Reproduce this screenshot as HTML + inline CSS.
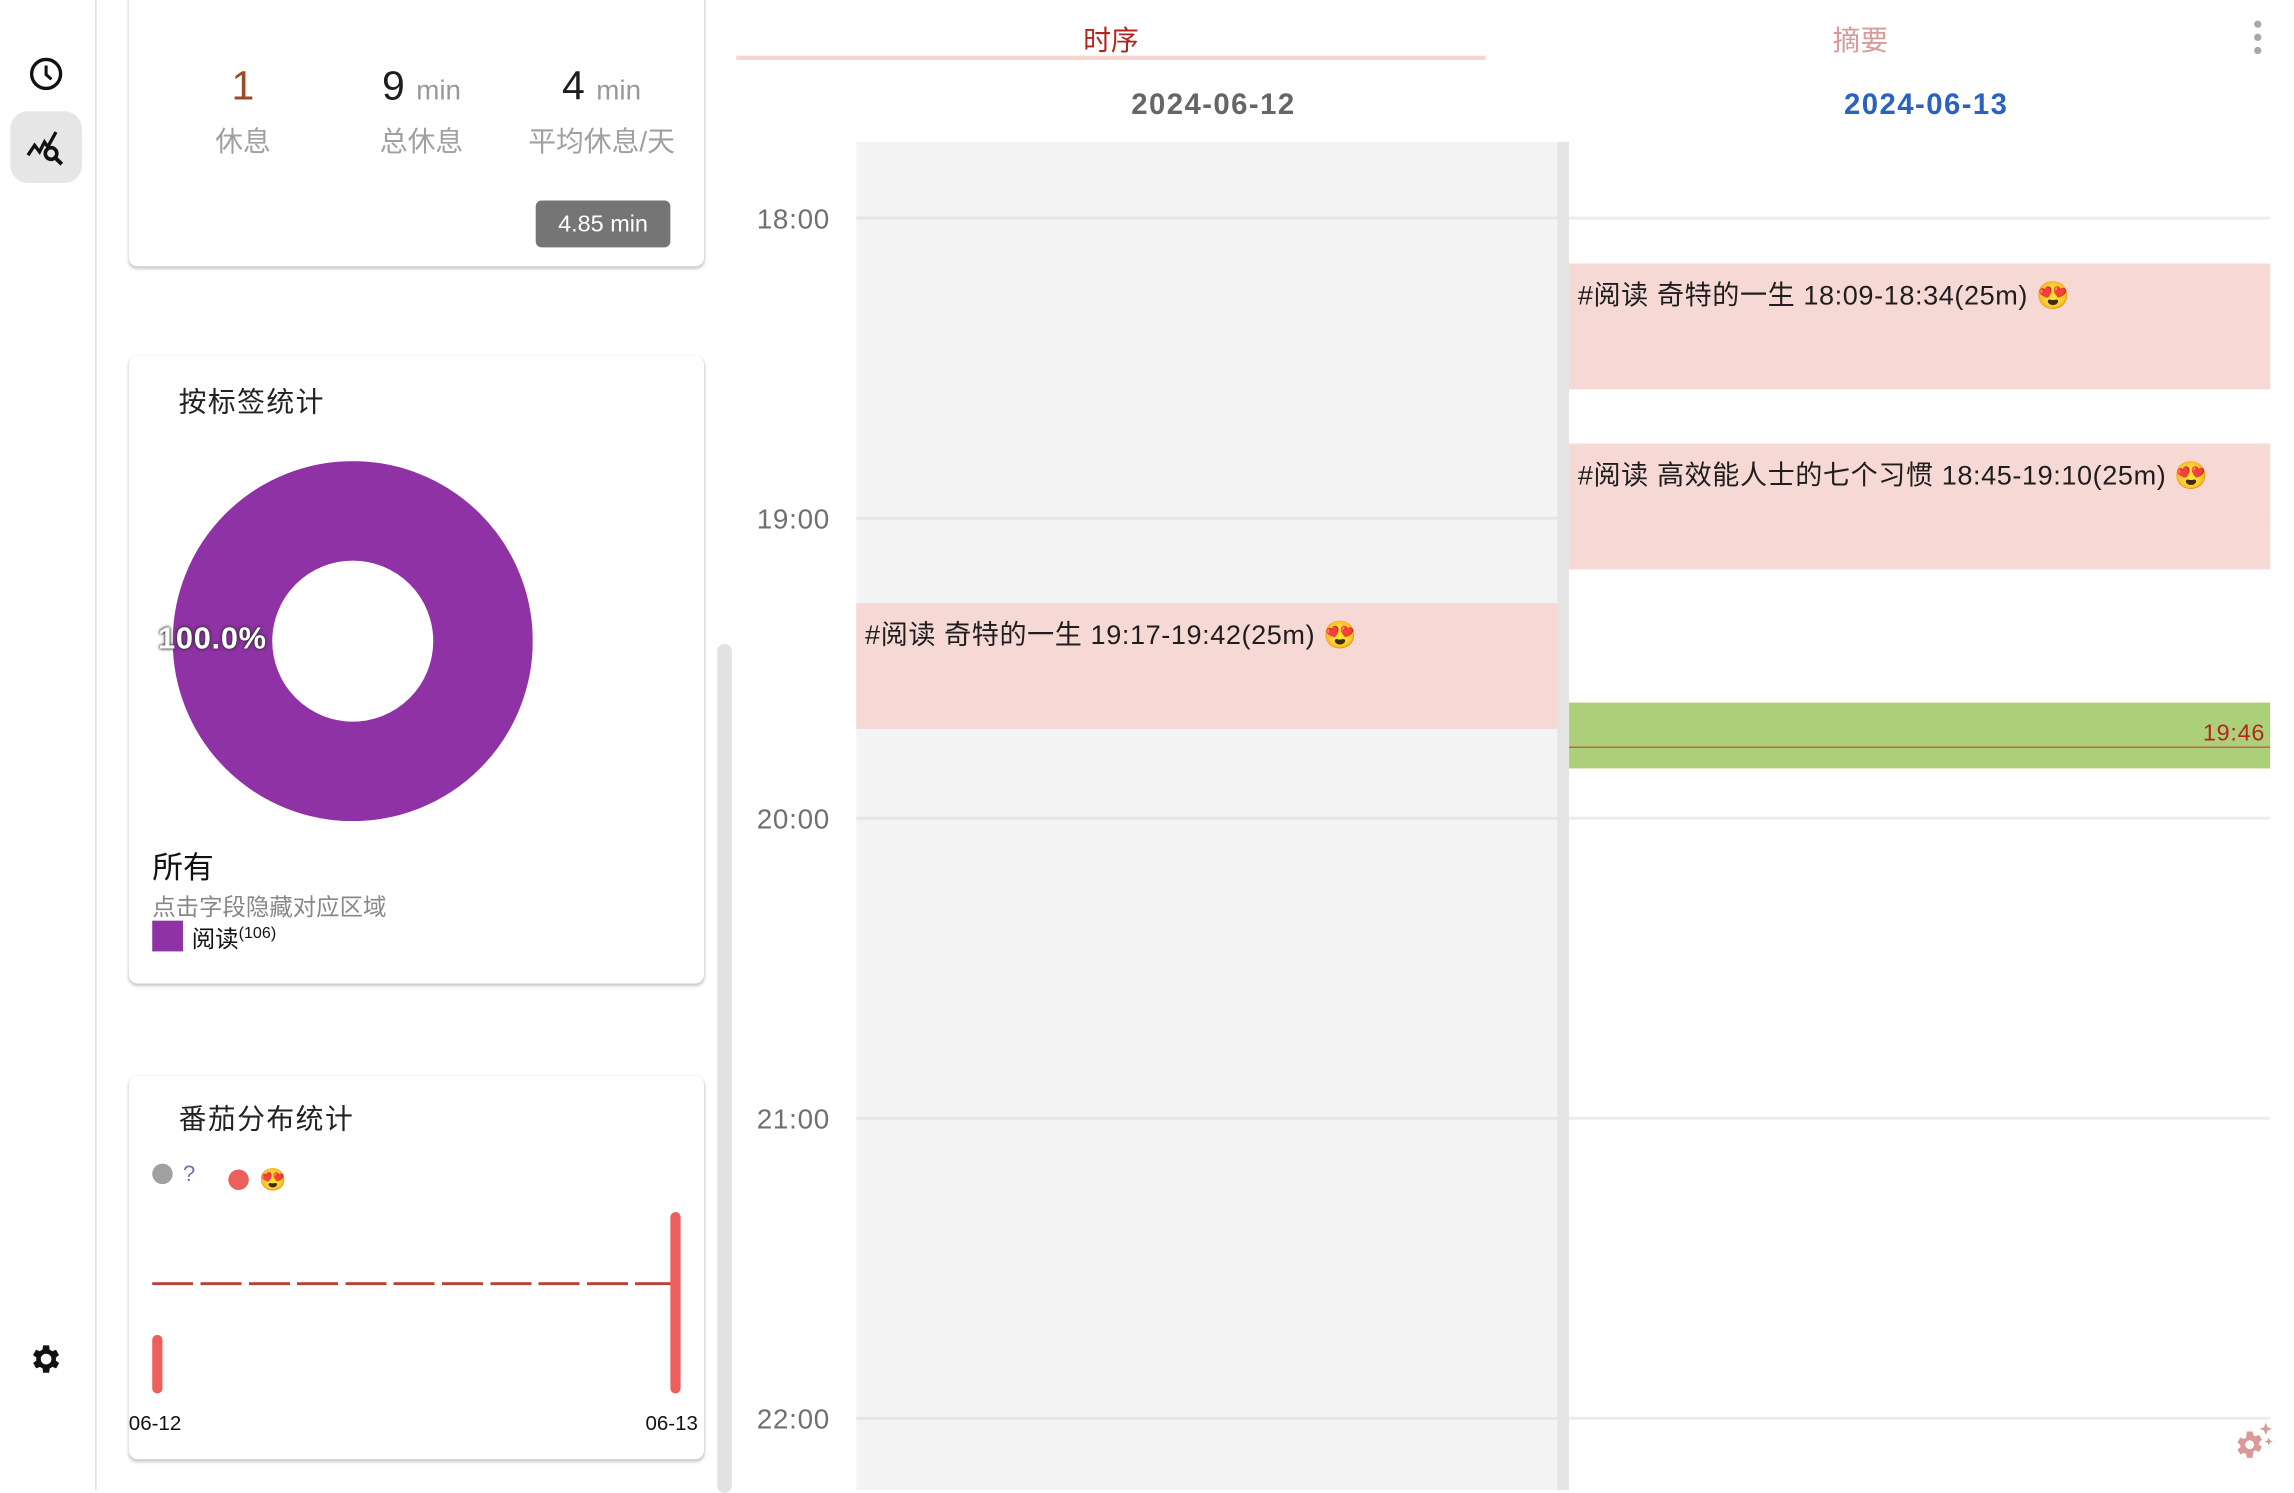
<!DOCTYPE html>
<html><head><meta charset="utf-8"><style>
html,body{margin:0;padding:0;width:2294px;height:1490px;overflow:hidden;background:#fff}
#w{position:absolute;left:0;top:0;width:1568px;height:1018px;transform:scale(1.4637);transform-origin:0 0;font-family:"Liberation Sans","Noto Sans CJK SC",sans-serif;color:#222}
.a{position:absolute}
.card{position:absolute;left:88px;width:393px;background:#fff;border-radius:6px;box-shadow:0 1.5px 2px rgba(0,0,0,.22),0 0 1px rgba(0,0,0,.08)}
.hl{position:absolute;height:2px;background:#ececec}
.hr{position:absolute;left:517px;font-size:19px;color:#707070;letter-spacing:.5px}
.ev{position:absolute;background:#f6d9d4;font-size:18.5px;letter-spacing:.4px;color:#1e1e1e;padding:8px 6px;box-sizing:border-box;white-space:nowrap}
.c{text-align:center}
</style></head><body><div id="w">
<div class="a" style="left:65px;top:0;width:1px;height:1018px;background:#dedede"></div>
<svg class="a" style="left:19px;top:38px" width="25" height="25" viewBox="0 0 24 24"><circle cx="12" cy="12" r="9.5" fill="none" stroke="#111" stroke-width="2.2"/><path d="M12 6.5V12.5L15.5 15.5" fill="none" stroke="#111" stroke-width="2"/></svg>
<div class="a" style="left:7px;top:76px;width:49px;height:49px;background:#e6e6e6;border-radius:12px"></div>
<svg class="a" style="left:18px;top:88px" width="27" height="27" viewBox="0 0 24 24"><path d="M1 16L5 10L8 14L11 8L13 11L18 2" fill="none" stroke="#111" stroke-width="2"/><circle cx="15" cy="15" r="3.5" fill="none" stroke="#111" stroke-width="2.2"/><path d="M17.5 17.5L21.5 21.5" stroke="#111" stroke-width="2.4"/></svg>
<svg class="a" style="left:19px;top:916px" width="25" height="25" viewBox="0 0 24 24"><path fill="#111" d="M19.4 13a7.5 7.5 0 0 0 0-2l2.1-1.6-2-3.5-2.5 1a7.6 7.6 0 0 0-1.7-1L15 3h-4l-.4 2.9a7.6 7.6 0 0 0-1.7 1l-2.5-1-2 3.5L6.6 11a7.5 7.5 0 0 0 0 2l-2.1 1.6 2 3.5 2.5-1a7.6 7.6 0 0 0 1.7 1L11 21h4l.4-2.9a7.6 7.6 0 0 0 1.7-1l2.5 1 2-3.5zM13 15.5a3.5 3.5 0 1 1 0-7 3.5 3.5 0 0 1 0 7z" transform="translate(-1 0)"/></svg>

<div class="card" style="top:-10px;height:192px"></div>
<div class="a c" style="left:116px;width:100px;top:43px;font-size:28px;color:#9a4a2a">1</div>
<div class="a c" style="left:116px;width:100px;top:82px;font-size:19px;color:#a0a0a0">休息</div>
<div class="a c" style="left:228px;width:120px;top:43px;font-size:28px;color:#1e1e1e">9 <span style="font-size:19px;color:#999">min</span></div>
<div class="a c" style="left:228px;width:120px;top:82px;font-size:19px;color:#a0a0a0">总休息</div>
<div class="a c" style="left:346px;width:130px;top:43px;font-size:28px;color:#1e1e1e">4 <span style="font-size:19px;color:#999">min</span></div>
<div class="a c" style="left:346px;width:130px;top:82px;font-size:19px;color:#a0a0a0">平均休息/天</div>
<div class="a c" style="left:366px;top:137px;width:92px;height:32px;line-height:33px;background:#757575;color:#fff;border-radius:4px;font-size:16px">4.85 min</div>

<div class="card" style="top:243px;height:429px"></div>
<div class="a" style="left:122px;top:260px;font-size:19px;letter-spacing:1px">按标签统计</div>
<svg class="a" style="left:118px;top:315px" width="246" height="246"><circle cx="123" cy="123" r="89" fill="none" stroke="#8f32a6" stroke-width="68"/></svg>
<div class="a" style="left:108px;top:425px;font-size:21px;font-weight:bold;letter-spacing:.5px;color:#fff;text-shadow:0 0 2px #333,0 0 2px #333">100.0%</div>
<div class="a" style="left:104px;top:577px;font-size:21px;color:#111">所有</div>
<div class="a" style="left:104px;top:606px;font-size:16px;color:#888">点击字段隐藏对应区域</div>
<div class="a" style="left:104px;top:629px;width:21px;height:21px;background:#8f32a6"></div>
<div class="a" style="left:131px;top:628px;font-size:16px;color:#111">阅读<sup style="font-size:11px">(106)</sup></div>

<div class="card" style="top:735px;height:262px"></div>
<div class="a" style="left:122px;top:750px;font-size:19px;letter-spacing:1px">番茄分布统计</div>
<div class="a" style="left:104px;top:795px;width:14px;height:14px;border-radius:50%;background:#a0a0a0"></div>
<div class="a" style="left:125px;top:794px;font-size:15px;color:#7a6fa5">?</div>
<div class="a" style="left:156px;top:799px;width:14px;height:14px;border-radius:50%;background:#ec5f5c"></div>
<div class="a" style="left:177px;top:797px;font-size:15px">😍</div>
<div class="a" style="left:104px;top:876px;width:357px;height:2px;background:repeating-linear-gradient(90deg,#b9413b 0 28px,transparent 28px 33px)"></div>
<div class="a" style="left:104px;top:912px;width:7px;height:40px;border-radius:4px;background:#ec5f5c"></div>
<div class="a" style="left:458px;top:828px;width:7px;height:124px;border-radius:4px;background:#ec5f5c"></div>
<div class="a" style="left:88px;top:964px;font-size:14px;color:#111">06-12</div>
<div class="a" style="left:441px;top:964px;font-size:14px;color:#111">06-13</div>

<div class="a" style="left:490px;top:440px;width:10px;height:580px;border-radius:5px;background:#e2e2e2"></div>

<div class="a c" style="left:503px;width:512px;top:13px;font-size:19px;color:#b3261e">时序</div>
<div class="a" style="left:503px;top:38px;width:512px;height:3px;background:#f6d5d0"></div>
<div class="a c" style="left:1015px;width:512px;top:13px;font-size:19px;color:#d89a9a">摘要</div>
<div class="a" style="left:1540px;top:14px;width:5px;height:5px;border-radius:50%;background:#a8a8a8"></div>
<div class="a" style="left:1540px;top:23px;width:5px;height:5px;border-radius:50%;background:#a8a8a8"></div>
<div class="a" style="left:1540px;top:32px;width:5px;height:5px;border-radius:50%;background:#a8a8a8"></div>
<div class="a c" style="left:585px;width:488px;top:61px;font-size:20px;font-weight:bold;letter-spacing:1px;color:#666">2024-06-12</div>
<div class="a c" style="left:1072px;width:488px;top:61px;font-size:20px;font-weight:bold;letter-spacing:1px;color:#2a62c0">2024-06-13</div>

<div class="a" style="left:585px;top:97px;width:479px;height:921px;background:#f4f4f4"></div>
<div class="a" style="left:1064px;top:97px;width:8px;height:921px;background:#e4e4e4"></div>
<div class="hl" style="left:585px;width:479px;top:148px;background:#e6e6e6"></div>
<div class="hl" style="left:1072px;width:479px;top:148px"></div>
<div class="hl" style="left:585px;width:479px;top:353px;background:#e6e6e6"></div>
<div class="hl" style="left:1072px;width:479px;top:353px"></div>
<div class="hl" style="left:585px;width:479px;top:558px;background:#e6e6e6"></div>
<div class="hl" style="left:1072px;width:479px;top:558px"></div>
<div class="hl" style="left:585px;width:479px;top:763px;background:#e6e6e6"></div>
<div class="hl" style="left:1072px;width:479px;top:763px"></div>
<div class="hl" style="left:585px;width:479px;top:968px;background:#e6e6e6"></div>
<div class="hl" style="left:1072px;width:479px;top:968px"></div>
<div class="hr" style="top:140px">18:00</div>
<div class="hr" style="top:345px">19:00</div>
<div class="hr" style="top:550px">20:00</div>
<div class="hr" style="top:755px">21:00</div>
<div class="hr" style="top:960px">22:00</div>

<div class="ev" style="left:1072px;top:180px;width:479px;height:86px">#阅读 奇特的一生 18:09-18:34(25m) 😍</div>
<div class="ev" style="left:1072px;top:303px;width:479px;height:86px">#阅读 高效能人士的七个习惯 18:45-19:10(25m) 😍</div>
<div class="ev" style="left:585px;top:412px;width:479px;height:86px">#阅读 奇特的一生 19:17-19:42(25m) 😍</div>

<div class="a" style="left:1072px;top:480px;width:479px;height:45px;background:#acd07a"></div>
<div class="a" style="left:1072px;top:510px;width:479px;height:1px;background:#c0605a"></div>
<div class="a" style="left:1505px;top:493px;font-size:16px;letter-spacing:.5px;color:#b3261e">19:46</div>

<svg class="a" style="left:1522px;top:970px" width="32" height="30" viewBox="0 0 32 30"><path fill="#d89a9a" d="M26 2l1.2 3 3 1.2-3 1.2L26 10.4l-1.2-3-3-1.2 3-1.2z M28 12l.8 2 2 .8-2 .8L28 17.6l-.8-2-2-.8 2-.8z"/><path fill="#d89a9a" fill-rule="evenodd" d="M13 8h4l.5 2.5 1.5.8 2.4-1 2 3.4-2 1.6v1.6l2 1.6-2 3.4-2.4-1-1.5.8L17 26h-4l-.5-2.5-1.5-.8-2.4 1-2-3.4 2-1.6v-1.6l-2-1.6 2-3.4 2.4 1 1.5-.8zM15 14a3 3 0 1 0 0 6 3 3 0 0 0 0-6z"/></svg>
</div></body></html>
